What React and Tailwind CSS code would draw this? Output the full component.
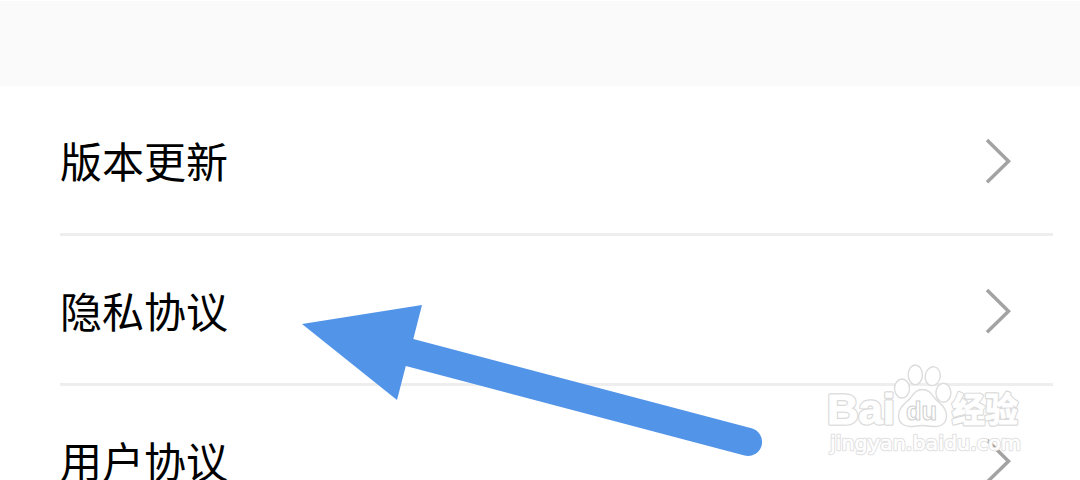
const rows = ['版本更新', '隐私协议', '用户协议'];

function Chevron() {
  return (
    <svg className="mt-[50px] h-12 w-7" viewBox="0 0 28 48" fill="none">
      <path d="M3 4L24.500 25.200L3 46.200" stroke="#a3a3a3" strokeWidth="3.500" />
    </svg>
  );
}

function Arrow() {
  return (
    <svg className="absolute left-0 top-0 h-[480px] w-[1080px]" viewBox="0 0 1080 480">
      <path
        d="M302 324L422 305L413.300 339L751.500 428.300A14 14 0 0 1 744.500 455.600L405.800 366L397 400Z"
        fill="#5294e8"
      />
    </svg>
  );
}

function Paw() {
  return (
    <g fill="#fff" stroke="#dcdcdc" strokeWidth="1.400">
      <ellipse cx="92" cy="28.500" rx="7.500" ry="9.500" />
      <ellipse cx="105.300" cy="14.800" rx="7.100" ry="9.800" />
      <ellipse cx="122.700" cy="16.200" rx="7.500" ry="9.500" transform="rotate(10 122.700 16.200)" />
      <ellipse cx="133.400" cy="32.800" rx="7.500" ry="9.500" />
      <path d="M112.500 29.500C106 29.500 103.500 34 100 38.500C96 43 88.500 47 88.500 55.500C88.500 63 94 66.500 100 66.500C105 66.500 108 65.500 112.500 65.500C117 65.500 120 66.500 125 66.500C131.500 66.500 136.500 63 136.500 55.500C136.500 47 129 43 125 38.500C121.500 34 119 29.500 112.500 29.500Z" />
    </g>
  );
}

// drawn twice: a grey rim first, then the white letters over it
function Lettering(props) {
  return (
    <g strokeLinejoin="round" {...props}>
      <text x="17" y="64" fontSize="43" fontWeight="700" textLength="68" lengthAdjust="spacingAndGlyphs">
        Bai
      </text>
      <text x="142" y="61.500" fontSize="34" fontWeight="700" textLength="66" lengthAdjust="spacingAndGlyphs">
        经验
      </text>
    </g>
  );
}

function SiteName(props) {
  return (
    <text
      x="20"
      y="90"
      fontSize="20"
      textLength="191"
      lengthAdjust="spacingAndGlyphs"
      className="font-['DejaVu_Sans',sans-serif]"
      strokeLinejoin="round"
      {...props}
    >
      jingyan.baidu.com
    </text>
  );
}

function Watermark() {
  return (
    <svg
      className="absolute left-[810px] top-[360px] h-[110px] w-[230px] font-['Liberation_Sans','Noto_Sans_CJK_SC',sans-serif]"
      viewBox="0 0 230 110"
    >
      <Paw />
      <Lettering fill="#dadada" stroke="#dadada" strokeWidth="3.400" />
      <Lettering fill="#fff" stroke="#fff" strokeWidth="1" />
      <text x="96" y="60" fontSize="25" fontWeight="700" fill="#fff" stroke="#cfcfcf" textLength="31" lengthAdjust="spacingAndGlyphs">
        du
      </text>
      <SiteName fill="#e0e0e0" stroke="#e0e0e0" strokeWidth="2.400" />
      <SiteName fill="#fff" stroke="#fff" strokeWidth="0.500" />
    </svg>
  );
}

export default function App() {
  return (
    <main className="relative h-[480px] w-[1080px] overflow-hidden bg-white font-['Noto_Sans_CJK_SC',sans-serif] text-black">
      <div className="h-[86px] border-t border-white bg-[#fafafa]" />
      <ul className="pl-[60px] pr-[27px]">
        {rows.map((label) => (
          <li key={label} className="flex h-[150px] justify-between border-b-[3px] border-[#eeeeee] pr-[41px]">
            <span className="mt-[43px] text-[42px] leading-[62px]">{label}</span>
            <Chevron />
          </li>
        ))}
      </ul>
      <Arrow />
      <Watermark />
    </main>
  );
}
